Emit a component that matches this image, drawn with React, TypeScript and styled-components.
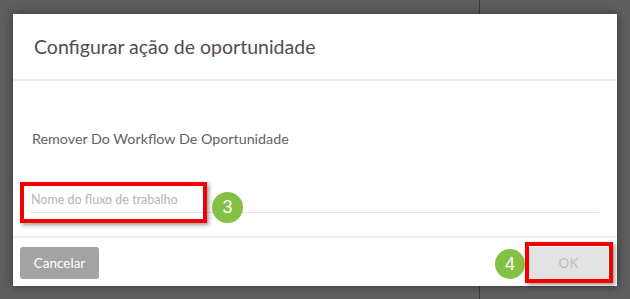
import styled, { createGlobalStyle } from 'styled-components';

const GlobalStyle = createGlobalStyle`
  html, body {
    margin: 0;
    padding: 0;
  }
  body {
    font-family: Lato, "Open Sans", sans-serif;
    background: #5f5f5f;
  }
`;

const Backdrop = styled.div`
  width: 630px;
  height: 299px;
  padding: 14px 0 0 13px;
  box-sizing: border-box;
  background:
    linear-gradient(to right, transparent 479px, #3c3c3c 479px, #3c3c3c 480px, transparent 480px),
    #5f5f5f;
  overflow: hidden;
`;

const Dialog = styled.div`
  position: relative;
  width: 604px;
  height: 272px;
  background: #fff;
  display: flex;
  flex-direction: column;
  box-shadow: 0 0 10px rgba(0, 0, 0, 0.45);
`;

const Header = styled.div`
  height: 67px;
  padding-left: 21px;
  display: flex;
  align-items: center;
  border-bottom: 2px solid #ececec;
  box-sizing: border-box;
  flex-shrink: 0;
`;

const Title = styled.h2`
  margin: 0;
  font-weight: 400;
  font-size: 19.5px;
  color: #4f4f4f;
`;

const Body = styled.div`
  flex: 1;
  padding: 0 18px 0 17px;
  display: flex;
  flex-direction: column;
  border-bottom: 2px solid #ececec;
`;

const Label = styled.div`
  margin-top: 49px;
  padding-left: 2px;
  font-size: 14.3px;
  color: #5d6664;
`;

const Field = styled.div`
  position: relative;
  margin-top: 41px;
  height: 24px;
  border-bottom: 1px solid #e3e3e3;
`;

const Input = styled.input`
  border: none;
  outline: none;
  background: transparent;
  width: 100%;
  padding: 0 0 0 1px;
  font-family: Lato, "Open Sans", sans-serif;
  font-size: 12.5px;
  color: #444;
  &::placeholder {
    color: #b5b5b5;
  }
`;

const Footer = styled.div`
  height: 48px;
  flex-shrink: 0;
  padding: 0 9px 0 7px;
  display: flex;
  align-items: center;
  justify-content: space-between;
`;

const Button = styled.button<{ $disabled?: boolean }>`
  border: none;
  width: 79px;
  height: 32px;
  margin-top: 1px;
  font-family: Lato, "Open Sans", sans-serif;
  font-size: 13.5px;
  background: ${(p) => (p.$disabled ? '#e3e3e3' : '#a3a3a3')};
  color: ${(p) => (p.$disabled ? '#bdbdbd' : '#fff')};
  border-radius: ${(p) => (p.$disabled ? '0' : '3px')};
`;

const Highlight = styled.div<{ $left: number; $top: number; $w: number; $h: number }>`
  position: absolute;
  left: ${(p) => p.$left}px;
  top: ${(p) => p.$top}px;
  width: ${(p) => p.$w}px;
  height: ${(p) => p.$h}px;
  border: 4px solid #f20000;
  box-sizing: border-box;
  box-shadow: 2px 2px 4px rgba(0, 0, 0, 0.4);
  pointer-events: none;
`;

const Step = styled.div<{ $left: number; $top: number; $size: number }>`
  position: absolute;
  left: ${(p) => p.$left}px;
  top: ${(p) => p.$top}px;
  width: ${(p) => p.$size}px;
  height: ${(p) => p.$size}px;
  border-radius: 50%;
  background: #84c044;
  color: #fff;
  font-family: "Liberation Sans", Arial, sans-serif;
  font-size: 18px;
  display: flex;
  align-items: center;
  justify-content: center;
`;

export default function App() {
  return (
    <>
      <GlobalStyle />
      <Backdrop>
        <Dialog>
          <Header>
            <Title>Configurar ação de oportunidade</Title>
          </Header>
          <Body>
            <Label>Remover Do Workflow De Oportunidade</Label>
            <Field>
              <Input placeholder="Nome do fluxo de trabalho" />
            </Field>
          </Body>
          <Footer>
            <Button>Cancelar</Button>
            <Button $disabled>OK</Button>
          </Footer>
          <Highlight $left={7} $top={168} $w={187} $h={41} />
          <Step $left={199} $top={178} $size={31}>3</Step>
          <Highlight $left={512} $top={228} $w={88} $h={41} />
          <Step $left={482} $top={235} $size={30}>4</Step>
        </Dialog>
      </Backdrop>
    </>
  );
}
